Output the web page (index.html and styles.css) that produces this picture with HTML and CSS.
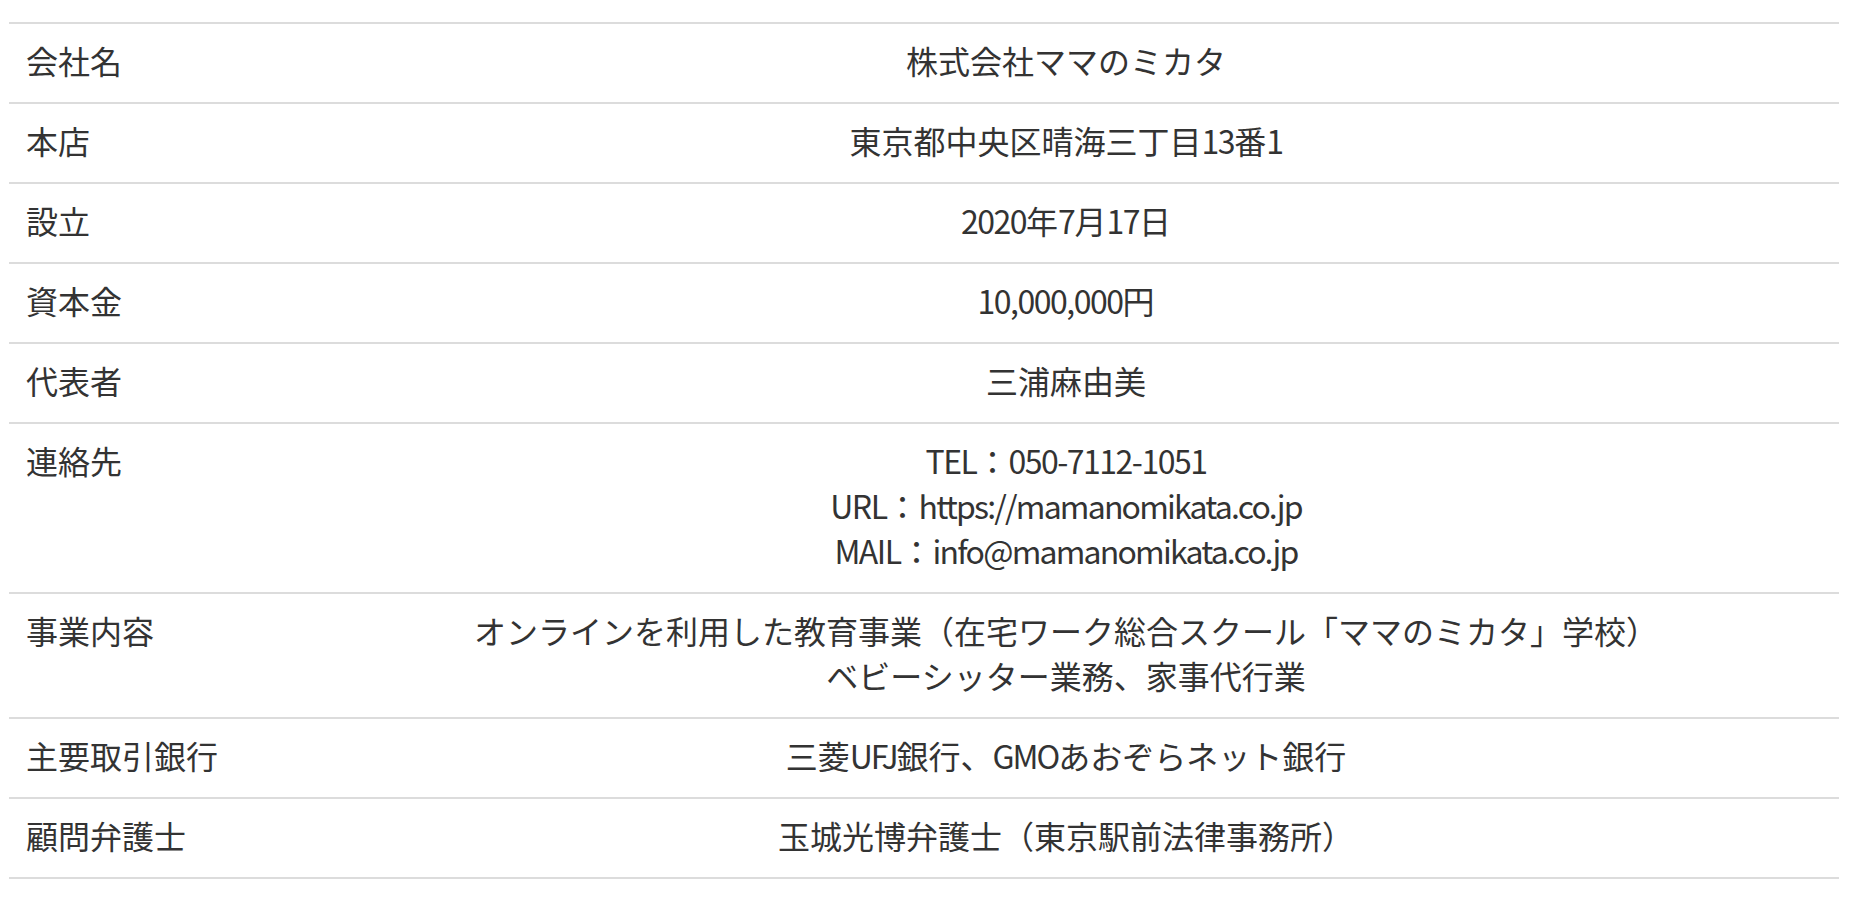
FILE: index.html
```html
<!DOCTYPE html>
<html lang="ja">
<head>
<meta charset="utf-8">
<title>会社概要</title>
<link rel="stylesheet" href="styles.css">
</head>
<body>
<div class="wrap">
  <div class="table">
    <div class="row"><div class="th">会社名</div><div class="td">株式会社ママのミカタ</div></div>
    <div class="row"><div class="th">本店</div><div class="td">東京都中央区晴海三丁目<span class="en">13</span>番<span class="en">1</span></div></div>
    <div class="row"><div class="th">設立</div><div class="td"><span class="en">2020</span>年<span class="en">7</span>月<span class="en">17</span>日</div></div>
    <div class="row"><div class="th">資本金</div><div class="td"><span class="en">10,000,000</span>円</div></div>
    <div class="row"><div class="th">代表者</div><div class="td">三浦麻由美</div></div>
    <div class="row"><div class="th">連絡先</div><div class="td"><span class="en">TEL</span>：<span class="en">050-7112-1051</span><br><span class="en">URL</span>：<span class="en tight">https://mamanomikata.co.jp</span><br><span class="en">MAIL</span>：<span class="en tight">info@mamanomikata.co.jp</span></div></div>
    <div class="row"><div class="th">事業内容</div><div class="td">オンラインを利用した教育事業（在宅ワーク総合スクール「ママのミカタ」学校）<br>ベビーシッター業務、家事代行業</div></div>
    <div class="row"><div class="th">主要取引銀行</div><div class="td">三菱<span class="en caps">UFJ</span>銀行、<span class="en caps">GMO</span>あおぞらネット銀行</div></div>
    <div class="row"><div class="th">顧問弁護士</div><div class="td">玉城光博弁護士（東京駅前法律事務所）</div></div>
  </div>
</div>
</body>
</html>
```

FILE: styles.css
```css
html, body {
  margin: 0;
  padding: 0;
  background: #fff;
}
body {
  font-family: "Noto Sans CJK JP", "Noto Sans", sans-serif;
  color: #333;
  font-size: 32px;
  line-height: 45px;
}
.wrap {
  padding: 22px 31px 0 9px;
}
.table {
  border-bottom: 2px solid #dcdcdc;
}
.row {
  display: grid;
  grid-template-columns: 284px 1fr;
  border-top: 2px solid #dcdcdc;
}
.th {
  padding: 14px 0 19px 17px;
  text-align: left;
}
.td {
  padding: 14px 0 19px 0;
  text-align: center;
}
.en {
  letter-spacing: -1.5px;
}
.en.tight {
  letter-spacing: -1.8px;
}
.en.caps {
  letter-spacing: -2px;
}
```
